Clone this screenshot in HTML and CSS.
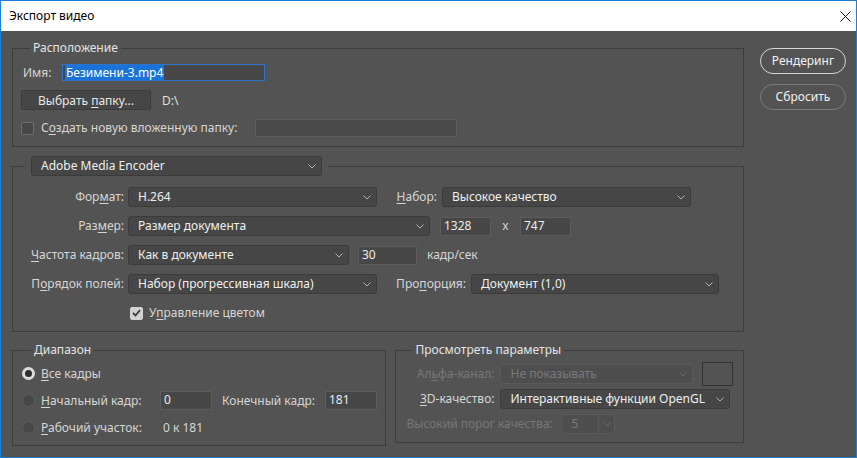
FILE: index.html
```html
<!DOCTYPE html>
<html lang="ru">
<head>
<meta charset="utf-8">
<title>Экспорт видео</title>
<link rel="stylesheet" href="styles.css">
</head>
<body>
<div class="window">
  <div class="titlebar">
    <span class="title">Экспорт видео</span>
    <svg class="close" width="11" height="11" viewBox="0 0 11 11"><path d="M0.5 0.5L10.5 10.5M10.5 0.5L0.5 10.5" stroke="#111" stroke-width="1" fill="none"/></svg>
  </div>
  <div class="content">
    <div class="main">
      <fieldset class="group g-loc">
        <legend class="legend">Расположение</legend>
        <div class="row r-name">
          <span class="lbl lbl-name">Имя:</span>
          <div class="input input-focus w-name"><span class="sel-text">Безимени-3.mp4</span></div>
        </div>
        <div class="row r-folder">
          <div class="btn"><span>Выбрать <u>п</u>апку...</span></div>
          <span class="path">D:\</span>
        </div>
        <div class="row r-sub">
          <span class="check"></span>
          <span class="lbl check-lbl">С<u>о</u>здать новую вложенную папку:</span>
          <div class="input w-sub"></div>
        </div>
      </fieldset>

      <fieldset class="group g-enc">
        <legend class="legend-select">
          <div class="select w-ame"><span class="val">Adobe Media Encoder</span><svg class="chev" width="8" height="5" viewBox="0 0 8 5"><path d="M0.5 0.5L4 4L7.5 0.5" stroke="#b4b4b4" fill="none"/></svg></div>
        </legend>
        <div class="row erow">
          <span class="cell c1">Фор<u>м</u>ат:</span>
          <div class="select w249"><span class="val">H.264</span><svg class="chev" width="8" height="5" viewBox="0 0 8 5"><path d="M0.5 0.5L4 4L7.5 0.5" stroke="#b4b4b4" fill="none"/></svg></div>
          <span class="cell c-nabor"><u>Н</u>абор:</span>
          <div class="select w249 ml5"><span class="val">Высокое качество</span><svg class="chev" width="8" height="5" viewBox="0 0 8 5"><path d="M0.5 0.5L4 4L7.5 0.5" stroke="#b4b4b4" fill="none"/></svg></div>
        </div>
        <div class="row erow">
          <span class="cell c1">Раз<u>м</u>ер:</span>
          <div class="select w302"><span class="val">Размер документа</span><svg class="chev" width="8" height="5" viewBox="0 0 8 5"><path d="M0.5 0.5L4 4L7.5 0.5" stroke="#b4b4b4" fill="none"/></svg></div>
          <div class="input w51 ml10">1328</div>
          <span class="times">x</span>
          <div class="input w51">747</div>
        </div>
        <div class="row erow">
          <span class="cell c1"><u>Ч</u>астота кадров:</span>
          <div class="select w221"><span class="val">Как в документе</span><svg class="chev" width="8" height="5" viewBox="0 0 8 5"><path d="M0.5 0.5L4 4L7.5 0.5" stroke="#b4b4b4" fill="none"/></svg></div>
          <div class="input w59 ml9">30</div>
          <span class="lbl ml10">кадр/сек</span>
        </div>
        <div class="row erow">
          <span class="cell c1">П<u>о</u>рядок полей:</span>
          <div class="select w249"><span class="val">Набор (прогрессивная шкала)</span><svg class="chev" width="8" height="5" viewBox="0 0 8 5"><path d="M0.5 0.5L4 4L7.5 0.5" stroke="#b4b4b4" fill="none"/></svg></div>
          <span class="cell c-prop">Про<u>п</u>орция:</span>
          <div class="select w248 ml5"><span class="val">Документ (1,0)</span><svg class="chev" width="8" height="5" viewBox="0 0 8 5"><path d="M0.5 0.5L4 4L7.5 0.5" stroke="#b4b4b4" fill="none"/></svg></div>
        </div>
        <div class="row erow r-color">
          <span class="check checked"><svg width="9" height="8" viewBox="0 0 9 8"><path d="M1 4L3.5 6.5L8 1.2" stroke="#3a3a3a" stroke-width="1.8" fill="none"/></svg></span>
          <span class="lbl check-lbl2">У<u>п</u>равление цветом</span>
        </div>
      </fieldset>

      <div class="bottom">
        <fieldset class="group g-range">
          <legend class="legend">Диапазон</legend>
          <div class="row rrow">
            <span class="radio on"></span>
            <span class="lbl rlbl"><u>В</u>се кадры</span>
          </div>
          <div class="row rrow">
            <span class="radio"></span>
            <span class="lbl rlbl rcell"><u>Н</u>ачальный кадр:</span>
            <div class="input w52">0</div>
            <span class="lbl rcell2">Конечный кадр:</span>
            <div class="input w52">181</div>
          </div>
          <div class="row rrow">
            <span class="radio"></span>
            <span class="lbl rlbl rcell"><u>Р</u>абочий участок:</span>
            <span class="lbl range-val">0 к 181</span>
          </div>
        </fieldset>

        <fieldset class="group g-prev">
          <legend class="legend">Просмотреть параметры</legend>
          <div class="row prow">
            <span class="pcell dis">Ал<u>ь</u>фа-канал:</span>
            <div class="select disabled w193"><span class="val">Не показывать</span><svg class="chev" width="8" height="5" viewBox="0 0 8 5"><path d="M0.5 0.5L4 4L7.5 0.5" stroke="#6a6a6a" fill="none"/></svg></div>
            <span class="swatch"></span>
          </div>
          <div class="row prow">
            <span class="pcell"><u>3</u>D-качество:</span>
            <div class="select w230"><span class="val">Интерактивные функции OpenGL</span><svg class="chev" width="8" height="5" viewBox="0 0 8 5"><path d="M0.5 0.5L4 4L7.5 0.5" stroke="#b4b4b4" fill="none"/></svg></div>
          </div>
          <div class="row prow">
            <span class="pcell-wide dis">Высокий порог качества:</span>
            <div class="select disabled small"><span class="val">5</span><span class="split"><svg class="chev" width="8" height="5" viewBox="0 0 8 5"><path d="M0.5 0.5L4 4L7.5 0.5" stroke="#6a6a6a" fill="none"/></svg></span></div>
          </div>
        </fieldset>
      </div>
    </div>

    <div class="side">
      <div class="pill primary">Рендеринг</div>
      <div class="pill">Сбросить</div>
    </div>
  </div>
</div>
</body>
</html>
```

FILE: styles.css
```css
* { box-sizing: border-box; }
html, body { margin: 0; padding: 0; }
body {
  font-family: "Noto Sans", "Open Sans", sans-serif;
  font-size: 12px;
  background: #535353;
}
u { text-decoration: underline; text-underline-offset: 2px; text-decoration-thickness: 1px; }

.window {
  width: 857px;
  height: 458px;
  border: 1px solid #1c7fd6;
  background: #535353;
  display: flex;
  flex-direction: column;
}
.titlebar {
  height: 30px;
  background: #ffffff;
  display: flex;
  align-items: center;
  justify-content: space-between;
  padding: 0 5px 0 8px;
  flex: none;
}
.title { color: #000; font-size: 12px; line-height: 16px; }
.close { display: block; }

.content {
  display: flex;
  padding: 9px 0 0 11px;
  color: #d6d6d6;
}
.main { width: 732px; flex: none; }
.side {
  margin-left: 16px;
  padding-top: 8px;
  display: flex;
  flex-direction: column;
  gap: 10px;
}
.pill {
  width: 86px;
  height: 26px;
  border: 1px solid #7b7b7b;
  border-radius: 13px;
  display: flex;
  align-items: center;
  justify-content: center;
  color: #f2f2f2;
  line-height: 16px;
}
.pill.primary { border: 1.5px solid #d4d4d4; }

.group {
  margin: 0;
  border: 1px solid #3d3d3d;
  padding: 8px 8px 9px 8px;
  min-width: 0;
}
.legend {
  padding: 0 3px;
  margin-left: 9px;
  line-height: 16px;
  color: #e4e4e4;
}
.row { display: flex; align-items: center; }
.lbl { line-height: 16px; white-space: nowrap; }

/* Location group */
.r-name { height: 17px; }
.lbl-name { width: 41px; padding-left: 2px; }
.input {
  height: 19px;
  background: #474747;
  border: 1px solid #5d5d5d;
  color: #ececec;
  line-height: 16px;
  padding: 0 3px;
  white-space: nowrap;
}
.input-focus {
  height: 17px;
  border-color: #2f74c6;
  padding: 0 0 0 2px;
  display: flex;
  align-items: center;
}
.sel-text { background: #1a73d9; color: #ffffff; line-height: 15px; padding: 0 1px; }
.w-name { width: 203px; }
.r-folder { margin-top: 9px; height: 20px; }
.btn {
  width: 130px;
  height: 20px;
  background: #464646;
  border: 1px solid #3c3c3c;
  border-radius: 2px;
  display: flex;
  align-items: center;
  justify-content: center;
  color: #e8e8e8;
  white-space: nowrap;
}
.path { margin-left: 11px; color: #e0e0e0; }
.r-sub { margin-top: 9px; height: 18px; }
.check {
  width: 13px;
  height: 13px;
  border: 1px solid #6e6e6e;
  border-radius: 2px;
  background: #484848;
  flex: none;
  display: flex;
  align-items: center;
  justify-content: center;
}
.check.checked { background: #d2d2d2; border-color: #d2d2d2; margin-left: 109px; }
.check-lbl { margin-left: 7px; width: 214px; }
.w-sub { width: 202px; height: 18px; background: #4a4a4a; }

/* Encoder group */
.g-enc { margin-top: 9px; padding: 11px 8px 8px 8px; }
.legend-select { padding: 0 6px; margin-left: 4px; }
.select {
  height: 20px;
  background: #464646;
  border: 1px solid #3b3b3b;
  border-radius: 3px;
  display: flex;
  align-items: center;
  padding: 0 5px 0 9px;
  color: #efefef;
  flex: none;
}
.select .val { flex: 1; line-height: 16px; white-space: nowrap; overflow: hidden; }
.chev { display: block; flex: none; }
.w-ame { width: 291px; }
.erow { height: 20px; margin-bottom: 9px; }
.erow:last-child { margin-bottom: 0; }
.cell { text-align: right; line-height: 16px; white-space: nowrap; flex: none; }
.c1 { width: 103px; margin-right: 4px; }
.c-nabor { width: 60px; }
.c-prop { width: 89px; }
.w249 { width: 249px; }
.w248 { width: 248px; }
.w302 { width: 302px; }
.w221 { width: 221px; }
.w51 { width: 51px; }
.w59 { width: 59px; }
.w52 { width: 52px; }
.ml5 { margin-left: 5px; }
.ml9 { margin-left: 9px; }
.ml10 { margin-left: 10px; }
.times { width: 29px; text-align: center; line-height: 16px; }
.check-lbl2 { margin-left: 6px; }

/* Bottom groups */
.bottom { display: flex; align-items: flex-start; margin-top: 10px; }
.g-range { width: 375px; padding: 6px 8px 8px 9px; }
.g-prev { width: 349px; margin-left: 9px; padding: 6px 8px 8px 10px; }
.g-prev .legend { margin-left: 6px; }
.rrow { height: 19px; margin-bottom: 8px; }
.rrow:last-child { margin-bottom: 0; }
.radio {
  width: 13px;
  height: 13px;
  border-radius: 50%;
  background: #474747;
  border: 1px solid #5f5f5f;
  flex: none;
}
.radio.on {
  background: #2e2e2e;
  border: 3.5px solid #dcdcdc;
}
.rlbl { margin-left: 6px; }
.rcell { width: 119px; flex: none; }
.rcell2 { margin-left: 10px; width: 103px; flex: none; }
.range-val { padding-left: 3px; }

.prow { height: 20px; margin-bottom: 5px; }
.prow:last-child { margin-bottom: 0; }
.pcell { width: 88px; text-align: right; margin-right: 6px; line-height: 16px; white-space: nowrap; flex: none; }
.pcell-wide { width: 155px; line-height: 16px; white-space: nowrap; flex: none; }
.dis { color: #777777; }
.select.disabled { background: #4e4e4e; border-color: #5a5a5a; color: #7a7a7a; }
.w193 { width: 193px; }
.w230 { width: 230px; }
.swatch {
  width: 31px;
  height: 24px;
  margin: -2px 0 -2px 9px;
  border: 1px solid #333333;
  flex: none;
}
.select.small { width: 54px; padding: 0 0 0 9px; }
.split {
  width: 16px;
  height: 18px;
  border-left: 1px solid #5a5a5a;
  display: flex;
  align-items: center;
  justify-content: center;
  flex: none;
}
```
